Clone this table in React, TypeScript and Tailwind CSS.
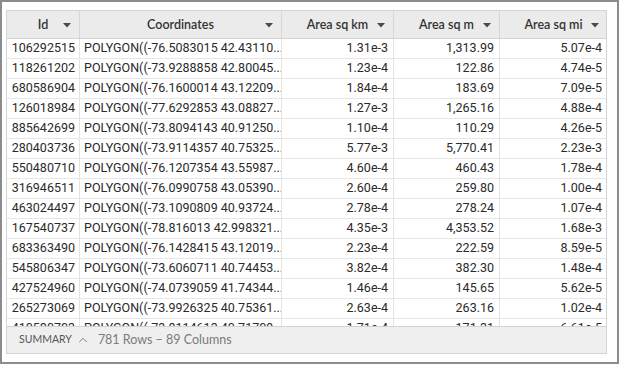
import { ChevronUp } from 'lucide-react';

const rows = [
    ['106292515', 'POLYGON((-76.5083015 42.43110...', '1.31e-3', '1,313.99', '5.07e-4'],
    ['118261202', 'POLYGON((-73.9288858 42.80045...', '1.23e-4', '122.86', '4.74e-5'],
    ['680586904', 'POLYGON((-76.1600014 43.12209...', '1.84e-4', '183.69', '7.09e-5'],
    ['126018984', 'POLYGON((-77.6292853 43.08827...', '1.27e-3', '1,265.16', '4.88e-4'],
    ['885642699', 'POLYGON((-73.8094143 40.91250...', '1.10e-4', '110.29', '4.26e-5'],
    ['280403736', 'POLYGON((-73.9114357 40.75325...', '5.77e-3', '5,770.41', '2.23e-3'],
    ['550480710', 'POLYGON((-76.1207354 43.55987...', '4.60e-4', '460.43', '1.78e-4'],
    ['316946511', 'POLYGON((-76.0990758 43.05390...', '2.60e-4', '259.80', '1.00e-4'],
    ['463024497', 'POLYGON((-73.1090809 40.93724...', '2.78e-4', '278.24', '1.07e-4'],
    ['167540737', 'POLYGON((-78.816013 42.998321...', '4.35e-3', '4,353.52', '1.68e-3'],
    ['683363490', 'POLYGON((-76.1428415 43.12019...', '2.23e-4', '222.59', '8.59e-5'],
    ['545806347', 'POLYGON((-73.6060711 40.74453...', '3.82e-4', '382.30', '1.48e-4'],
    ['427524960', 'POLYGON((-74.0739059 41.74344...', '1.46e-4', '145.65', '5.62e-5'],
    ['265273069', 'POLYGON((-73.9926325 40.75361...', '2.63e-4', '263.16', '1.02e-4'],
    ['410580703', 'POLYGON((-73.8114613 40.71709...', '1.71e-4', '171.31', '6.61e-5'],
];

const headers = ['Id', 'Coordinates', 'Area sq km', 'Area sq m', 'Area sq mi'];

function Caret() {
    return (
        <svg width="8" height="5" viewBox="0 0 8 5" className="absolute right-[8px] top-[12px]">
            <path d="M0 0 H8 L4 4.5 Z" fill="#4a4a4a" />
        </svg>
    );
}

export default function App() {
    return (
        <div className="w-[619px] h-[364px] bg-white border-2 border-[#8c8c8c] pl-[4px] pt-[8px] pr-[10px] pb-[8px]" style={{ fontFamily: 'Roboto, sans-serif' }}>
            <div className="h-full flex flex-col border border-[#d4d4d4] overflow-hidden">
                <div className="flex-1 overflow-hidden">
                    {/* header */}
                    <div className="grid grid-cols-[73px_202px_112px_106px_107px] h-[28px] bg-[#ebebeb] border-b border-[#d2d2d2]">
                        {headers.map((h, i) => (
                            <div
                                key={h}
                                className={`relative flex items-center justify-center pt-[1px] text-[12.5px] font-semibold text-[#333] ${i < 4 ? 'border-r border-[#d6d6d6]' : ''}`}
                                style={{ fontFamily: 'Lato, sans-serif' }}
                            >
                                <span>{h}</span>
                                <Caret />
                            </div>
                        ))}
                    </div>
                    {/* rows */}
                    {rows.map((r) => (
                        <div key={r[0]} className="grid grid-cols-[73px_202px_112px_106px_107px] h-[20px] border-b border-[#e6e6e6] text-[12.5px] text-[#2a2a2a]">
                            <div className="flex items-center justify-end pr-[4px] border-r border-[#e3e3e3]">{r[0]}</div>
                            <div className="flex items-center pl-[4px] border-r border-[#e3e3e3] whitespace-nowrap overflow-hidden">{r[1]}</div>
                            <div className="flex items-center justify-end pr-[5px] border-r border-[#e3e3e3]">{r[2]}</div>
                            <div className="flex items-center justify-end pr-[5px] border-r border-[#e3e3e3]">{r[3]}</div>
                            <div className="flex items-center justify-end pr-[5px]">{r[4]}</div>
                        </div>
                    ))}
                </div>
                {/* footer */}
                <div className="h-[27px] shrink-0 bg-[#efefef] border-t border-[#d2d2d2] flex items-center pl-[12px]" style={{ fontFamily: 'Lato, sans-serif' }}>
                    <span className="text-[10.5px] text-[#555]">SUMMARY</span>
                    <ChevronUp size={14} strokeWidth={1.4} className="ml-[4px] text-[#666]" />
                    <span className="ml-[8px] text-[12.5px] text-[#7a7a7a]">781 Rows – 89 Columns</span>
                </div>
            </div>
        </div>
    );
}
